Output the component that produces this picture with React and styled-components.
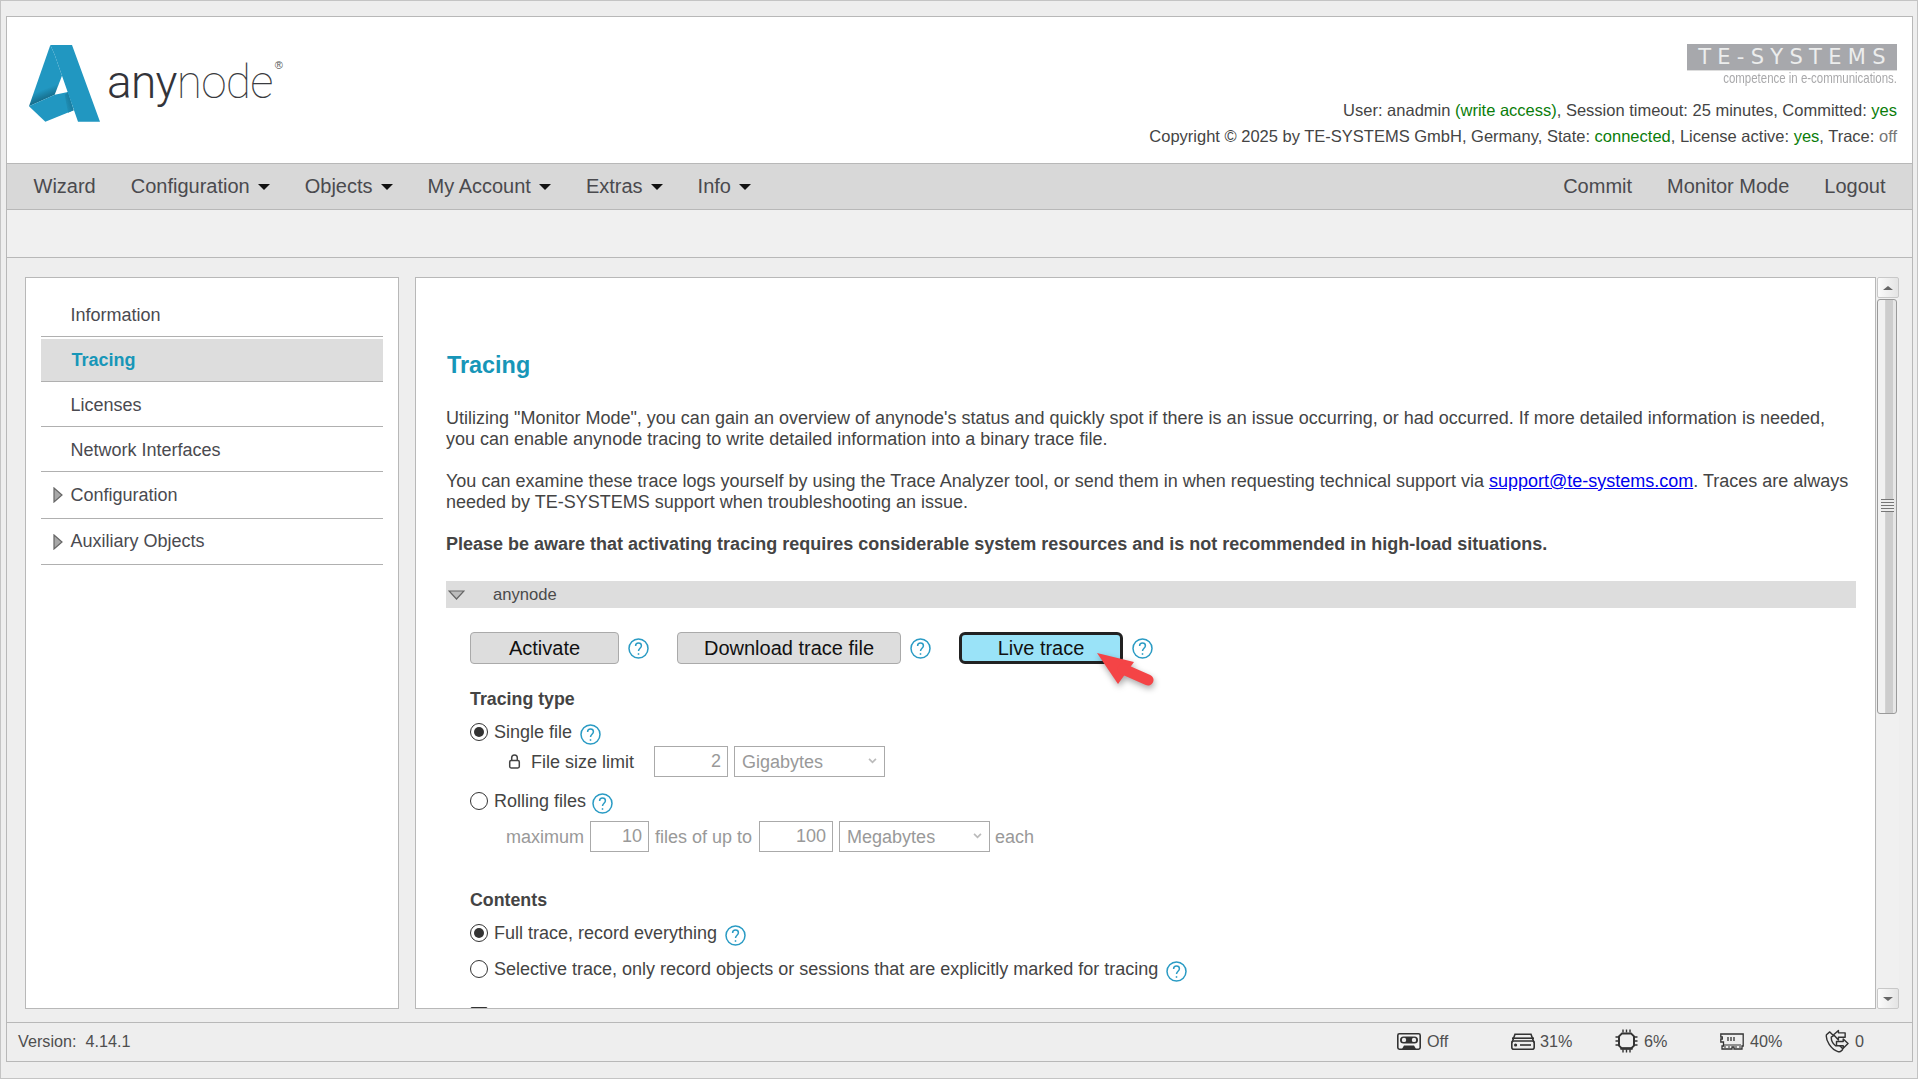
import React from "react";
import styled, { createGlobalStyle } from "styled-components";

const Global = createGlobalStyle`
  html, body { margin: 0; padding: 0; background: #fff; }
  body { font-family: "Liberation Sans", Arial, sans-serif; color: #444; }
`;

const Page = styled.div`
  box-sizing: border-box; width: 1918px; height: 1079px; background: #eee;
  border: 1px solid #c4c4c4; padding: 15px 4px 0 5px;
`;
const Frame = styled.div`
  box-sizing: border-box; height: 1046px; border: 1px solid #b8b8b8; display: flex; flex-direction: column;
  background: #eee; overflow: hidden;
`;

// header
const Header = styled.header`
  height: 146px; flex: none; background: #fff; display: flex; justify-content: space-between;
  padding: 0 15px 0 21px; box-sizing: border-box;
`;
const LogoWrap = styled.div` display: flex; align-items: flex-start; padding-top: 26px; gap: 5px; `;
const Wordmark = styled.div`
  font-family: Roboto, sans-serif; font-size: 46px; line-height: 54px; color: #33343a; font-weight: 300;
  letter-spacing: -0.7px; padding-top: 12px; display: flex; align-items: flex-start;
`;
const Thin = styled.span` font-weight: 100; color: #3a3b40; `;
const Reg = styled.span` font-size: 11px; line-height: 12px; margin: 4px 0 0 2px; font-family: "Liberation Sans", sans-serif; color: #555; letter-spacing: 0; `;
const HeaderRight = styled.div` display: flex; flex-direction: column; align-items: flex-end; padding-top: 27px; `;
const TeLogo = styled.div`
  width: 210px; height: 26px; box-sizing: content-box; background: #a7a8ac; color: #eceded; font-family: "DejaVu Sans", sans-serif; font-size: 21px; line-height: 26px;
  letter-spacing: 6.3px; text-align: center; text-indent: 6px; white-space: nowrap; border-bottom: 1px solid #ddd;
`;
const Tagline = styled.div`
  font-size: 14.5px; line-height: 15px; color: #a9a9ab; white-space: nowrap; transform: scaleX(0.79); transform-origin: right center;
`;
const Meta = styled.div`
  font-size: 16.5px; line-height: 26px; white-space: nowrap; color: #444; margin-top: ${(p) => p.$mt || 0}px;
`;
const Ok = styled.span` color: #0a7d0a; `;
const Mute = styled.span` color: #777; `;

// nav
const Nav = styled.nav`
  flex: none; height: 47px; box-sizing: border-box; background: #d8d8d8; border-top: 1px solid #b8b8b8; border-bottom: 1px solid #b8b8b8;
  display: flex; justify-content: space-between; padding: 0 9px 0 9px;
`;
const NavGroup = styled.div` display: flex; align-items: center; `;
const NavItem = styled.div`
  font-size: 20px; color: #4a4a4e; padding: 0 17.5px; display: flex; align-items: center; gap: 8px; white-space: nowrap;
`;
const Caret = styled.span`
  width: 0; height: 0; border-left: 6px solid transparent; border-right: 6px solid transparent; border-top: 6px solid #111;
`;
const Toolbar = styled.div` flex: none; height: 48px; box-sizing: border-box; background: #f0f0f0; border-bottom: 1px solid #b8b8b8; `;

// main
const Main = styled.main`
  flex: none; height: 764px; display: flex; padding: 19px 13px 0 18px; box-sizing: border-box; background: #eee;
`;
const Sidebar = styled.aside`
  box-sizing: border-box; width: 374px; height: 732px; flex: none; background: #fff; border: 1px solid #b8b8b8; padding: 14px 15px 0 15px;
`;
const SideItem = styled.div`
  height: ${(p) => p.$h || 45}px; box-sizing: border-box; display: flex; align-items: center; position: relative; padding-left: ${(p) => (p.$active ? 30.5 : 29.5)}px;
  padding-top: ${(p) => p.$pt || 0}px;
  font-size: 18px; color: #4a4a50; white-space: nowrap;
  border-bottom: 1px solid #b0b0b0;
  ${(p) => p.$active && "background: #ddd; color: #1796b8; font-weight: bold; margin-top: 1px; border-top: 1px solid #fff; background-clip: padding-box;"}
`;
const SideArrow = styled.svg` position: absolute; left: 12px; top: 50%; margin-top: -8px; `;

const Panel = styled.section`
  box-sizing: border-box; width: 1461px; height: 732px; flex: none; margin-left: 16px; background: #fff; border: 1px solid #b8b8b8;
  padding: 72px 18px 0 30px; overflow: hidden; font-size: 18px; color: #444;
`;
const Title = styled.h1`
  margin: 0 0 0 1px; font-size: 23.4px; line-height: 30px; font-weight: bold; color: #1796b8;
`;
const Para = styled.p`
  margin: ${(p) => p.$mt ?? 21}px 0 0; line-height: 21px; white-space: nowrap; font-weight: ${(p) => (p.$bold ? "bold" : "normal")};
`;
const Mail = styled.a` color: #0000ee; text-decoration: underline; `;
const GroupBar = styled.div`
  margin-top: 26px; height: 27px; background: #ddd; display: flex; align-items: center; font-size: 16.6px; color: #4a4a4a; gap: 28px; padding-left: 2px; width: 1410px; box-sizing: border-box;
`;
const ButtonRow = styled.div` margin: 24px 0 0 24px; display: flex; align-items: center; height: 32px; `;
const Btn = styled.button`
  box-sizing: border-box; height: 32px; width: ${(p) => p.$w}px; padding: 0; font: 20px "Liberation Sans", sans-serif; color: #111;
  background: ${(p) => (p.$live ? "#9ae3f8" : "#ddd")}; border: ${(p) => (p.$live ? "3px solid #222" : "1px solid #aaa")}; border-radius: ${(p) => (p.$live ? 6 : 4)}px;
`;
const HelpWrap = styled.span`
  display: inline-flex; margin-left: ${(p) => p.$ml ?? 9}px; margin-right: ${(p) => p.$mr || 0}px; position: relative; top: ${(p) => p.$top || 0}px;
`;
const LiveWrap = styled.span` position: relative; display: inline-flex; `;
const Arrow = styled.svg`
  position: absolute; left: 134px; top: 17px; overflow: visible; filter: drop-shadow(1px 3px 3px rgba(0,0,0,.35));
`;
const Section = styled.div`
  margin: ${(p) => p.$mt}px 0 0 24px; font-weight: bold; font-size: 17.8px; line-height: 24px; color: #444;
`;
const Row = styled.div`
  margin: ${(p) => p.$mt}px 0 0 ${(p) => p.$ml ?? 24}px; min-height: 24px; display: flex; align-items: center; white-space: nowrap; font-size: 18px;
  color: ${(p) => (p.$off ? "#999" : "#444")};
`;
const Radio = styled.span`
  box-sizing: border-box; width: 18px; height: 18px; border-radius: 50%; border: 1.6px solid #333; background: #fff; display: inline-flex; align-items: center; justify-content: center; margin-right: 6px; flex: none;
  &::after { content: ""; width: 10px; height: 10px; border-radius: 50%; background: ${(p) => (p.$on ? "#333" : "transparent")}; }
`;
const Check = styled.div`
  margin: 26px 0 0 24px; box-sizing: border-box; width: 18px; height: 18px; border: 1.6px solid #333; border-radius: 2px;
`;
const Field = styled.input`
  box-sizing: border-box; width: ${(p) => p.$w}px; height: 31px; border: 1px solid #aaa; background: #fff; text-align: right; color: #999; font: 18px "Liberation Sans", sans-serif; padding: 0 6px 1px 0; margin: ${(p) => p.$m || "0"}; outline: 0;
`;
const RowText = styled.span` padding-top: 2px; `;
const SelectWrap = styled.span` position: relative; display: inline-flex; margin: 0 5px 0 6px; `;
const Select = styled.select`
  appearance: none; box-sizing: border-box; width: 151px; height: 31px; border: 1px solid #aaa; background: #fff; color: #999; font: 18px "Liberation Sans", sans-serif; padding: 0 0 0 7px; opacity: 1;
`;
const Chevron = styled.svg` position: absolute; right: 8px; top: 12px; `;

// scrollbar
const Scroll = styled.div`
  flex: none; width: 22px; height: 732px; margin-left: 1px; background: #f0f0f0; display: flex; flex-direction: column; justify-content: space-between; position: relative;
`;
const ScrollBtn = styled.div`
  box-sizing: border-box; height: 21px; border: 1px solid #c8c8c8; background: linear-gradient(90deg, #fbfbfb, #e4e4e4); display: flex; align-items: center; justify-content: center; border-radius: 2px;
`;
const ScrollTri = styled.span`
  width: 0; height: 0; border-left: 5px solid transparent; border-right: 5px solid transparent;
  ${(p) => (p.$up ? "border-bottom: 4px solid #666;" : "border-top: 4px solid #666;")}
`;
const Thumb = styled.div`
  position: absolute; left: 0; top: 22px; width: 20px; height: 415px; box-sizing: border-box; border: 1px solid #9a9a9a; border-radius: 3px;
  background: linear-gradient(90deg, #f1f1f1 0 40%, #cdcdcd 42% 82%, #e6e6e6 84%); display: flex; align-items: center; justify-content: center;
`;
const Grip = styled.div`
  width: 13px; height: 13px; margin-top: -2px; background: repeating-linear-gradient(180deg, #777 0 1px, #eee 1px 3px);
`;

// footer
const Footer = styled.footer`
  flex: 1; box-sizing: border-box; border-top: 1px solid #b8b8b8; display: flex; align-items: center; justify-content: space-between;
  padding: 0 48px 2px 11px; font-size: 16.2px; color: #4f4f4f; background: #eee;
`;
const Status = styled.div` display: flex; align-items: center; `;
const Stat = styled.div`
  width: ${(p) => p.$w}px; display: flex; align-items: center; gap: ${(p) => p.$gap ?? 6}px; white-space: nowrap;
`;

function Help(props) {
  return (
    <HelpWrap {...props}>
      <svg width="21" height="21" viewBox="0 0 21 21" fill="none" stroke="#2a9bc4" strokeWidth="1.5">
        <circle cx="10.5" cy="10.5" r="9.5" />
        <path d="M7.6 8.1c0-1.9 1.3-3 2.9-3s2.9 1.1 2.9 2.7c0 2.4-2.9 2.5-2.9 5.2" />
        <path d="M10.5 15.2v1.6" />
      </svg>
    </HelpWrap>
  );
}

function Logo() {
  return (
    <svg width="74" height="80" viewBox="85 130 222 240">
      <defs>
        <linearGradient id="fold1" x1="150" y1="320" x2="130" y2="270" gradientUnits="userSpaceOnUse">
          <stop offset="0" stopColor="#2197c1" />
          <stop offset="0.5" stopColor="#17708f" />
          <stop offset="1" stopColor="#2197c1" />
        </linearGradient>
        <linearGradient id="fold2" x1="190" y1="310" x2="225" y2="300" gradientUnits="userSpaceOnUse">
          <stop offset="0" stopColor="#2197c1" />
          <stop offset="1" stopColor="#176f8e" />
        </linearGradient>
      </defs>
      <polygon points="152,136 88,320 165,285 187,228 165,165" fill="url(#fold1)" />
      <polygon points="88,320 137,366 222,332 205,277 165,285" fill="#2197c1" />
      <polygon points="195,285 205,277 222,332 205,339" fill="url(#fold2)" />
      <polygon points="152,136 217,136 301,366 235,366 187,228 165,165" fill="#2197c1" />
    </svg>
  );
}

function Triangle() {
  return (
    <SideArrow width="10" height="16" viewBox="0 0 10 16">
      <polygon points="1,1 9,8 1,15" fill="#a8a8a8" stroke="#666" strokeWidth="1.2" />
    </SideArrow>
  );
}

function Cassette() {
  return (
    <svg width="24" height="17" viewBox="0 0 24 17">
      <rect x="0.8" y="0.8" width="22.4" height="15.4" rx="1.6" fill="#f4f4f4" stroke="#333" strokeWidth="1.6" />
      <rect x="3" y="3.4" width="18" height="7" rx="3.5" fill="#333" />
      <circle cx="7" cy="6.9" r="2.2" fill="#eee" />
      <circle cx="17" cy="6.9" r="2.2" fill="#eee" />
      <path d="M5 16l2-3.5h10l2 3.5z" fill="#333" />
    </svg>
  );
}

function Disk() {
  return (
    <svg width="24" height="17" viewBox="0 0 24 17" fill="none" stroke="#333" strokeWidth="1.6">
      <path d="M1 9.5L4 1.2h16l3 8.3" />
      <rect x="0.8" y="8" width="22.4" height="8.2" rx="2" />
      <path d="M1 5.2h22" />
      <path d="M9 12h11" />
      <circle cx="4.6" cy="12" r="0.8" fill="#333" />
    </svg>
  );
}

function Chip() {
  return (
    <svg width="23" height="24" viewBox="0 0 23 24" fill="none" stroke="#333" strokeWidth="1.4">
      <path d="M7 4.4h9l3 3v9.2l-3 3H7l-3-3V7.4z" strokeWidth="2" />
      <path d="M8 0.5v3M11.5 0.5v3M15 0.5v3M8 20.5v3M11.5 20.5v3M15 20.5v3M0.5 8h3M0.5 12h3M0.5 16h3M19.5 8h3M19.5 12h3M19.5 16h3" />
      <path d="M6 19h11v1H6z" fill="#333" />
    </svg>
  );
}

function Ram() {
  return (
    <svg width="24" height="17" viewBox="0 0 24 17" fill="none" stroke="#333" strokeWidth="1.3">
      <path d="M0.8 1h22.4v12H22v3h-8v-2h-2v2H2v-3h1.5V9H.8V6h1.5V4H.8z" />
      <path d="M8 4v4M11 4v4M14 4v4" />
      <path d="M3 12h18M4 14h2M8 14h2M15 14h2M19 14h2" strokeWidth="1" />
    </svg>
  );
}

function Phone() {
  return (
    <svg width="25" height="24" viewBox="0 0 25 24" fill="none" stroke="#333" strokeWidth="1.5" strokeLinejoin="round">
      <path d="M5 2.5L1.5 5.5C.5 11 6 21 14 23.3c2 0 4.5-1.8 4.5-3.3L14 15.5 11 17c-2.5-2-4.5-6-4.5-9L9 6.5z" />
      <path d="M9 5.5L14 1v2.5h7V8h-7v3z" fill="#eee" />
      <path d="M24 14.7L19 10v2.5h-7V17h7v2.5z" fill="#eee" />
    </svg>
  );
}

const LockIcon = styled.svg` margin-right: 10px; `;
const Lock = () => (
  <LockIcon width="13" height="15" viewBox="0 0 13 15" fill="none" stroke="#444" strokeWidth="1.5">
    <rect x="1.7" y="6.5" width="9.6" height="7.5" rx="1.4" />
    <path d="M3.7 6.5V3.8a2.8 2.8 0 0 1 5.6 0v2.7" />
  </LockIcon>
);

function DisabledSelect({ value }) {
  return (
    <SelectWrap>
      <Select disabled value={value} onChange={() => {}}>
        <option>{value}</option>
      </Select>
      <Chevron width="9" height="6" viewBox="0 0 10 7" fill="none" stroke="#bbb" strokeWidth="2">
        <path d="M1 1l4 4 4-4" />
      </Chevron>
    </SelectWrap>
  );
}

const menus = [
  { label: "Wizard" },
  { label: "Configuration", caret: true },
  { label: "Objects", caret: true },
  { label: "My Account", caret: true },
  { label: "Extras", caret: true },
  { label: "Info", caret: true },
];

export default function App() {
  return (
    <Page>
      <Global />
      <Frame>
        <Header>
          <LogoWrap>
            <Logo />
            <Wordmark>
              any<Thin>node</Thin>
              <Reg>®</Reg>
            </Wordmark>
          </LogoWrap>
          <HeaderRight>
            <TeLogo>TE-SYSTEMS</TeLogo>
            <Tagline>competence in e-communications.</Tagline>
            <Meta $mt={11}>
              User: anadmin <Ok>(write access)</Ok>, Session timeout: 25 minutes, Committed: <Ok>yes</Ok>
            </Meta>
            <Meta>
              Copyright © 2025 by TE-SYSTEMS GmbH, Germany, State: <Ok>connected</Ok>, License active: <Ok>yes</Ok>, Trace: <Mute>off</Mute>
            </Meta>
          </HeaderRight>
        </Header>

        <Nav>
          <NavGroup>
            {menus.map((m) => (
              <NavItem key={m.label}>
                {m.label}
                {m.caret && <Caret />}
              </NavItem>
            ))}
          </NavGroup>
          <NavGroup>
            <NavItem>Commit</NavItem>
            <NavItem>Monitor Mode</NavItem>
            <NavItem>Logout</NavItem>
          </NavGroup>
        </Nav>
        <Toolbar />

        <Main>
          <Sidebar>
            <SideItem $pt={2}>Information</SideItem>
            <SideItem $active $h={44} $pt={1}>Tracing</SideItem>
            <SideItem $pt={2}>Licenses</SideItem>
            <SideItem $pt={2}>Network Interfaces</SideItem>
            <SideItem $h={47}><Triangle />Configuration</SideItem>
            <SideItem $h={46}><Triangle />Auxiliary Objects</SideItem>
          </Sidebar>

          <Panel>
            <Title>Tracing</Title>
            <Para $mt={28}>
              Utilizing "Monitor Mode", you can gain an overview of anynode's status and quickly spot if there is an issue occurring, or had occurred. If more detailed information is needed,
              <br />
              you can enable anynode tracing to write detailed information into a binary trace file.
            </Para>
            <Para>
              You can examine these trace logs yourself by using the Trace Analyzer tool, or send them in when requesting technical support via <Mail href="#">support@te-systems.com</Mail>. Traces are always
              <br />
              needed by TE-SYSTEMS support when troubleshooting an issue.
            </Para>
            <Para $bold>Please be aware that activating tracing requires considerable system resources and is not recommended in high-load situations.</Para>

            <GroupBar>
              <svg width="17" height="10" viewBox="0 0 17 10">
                <polygon points="1,1 16,1 8.5,9" fill="#bdbdbd" stroke="#666" strokeWidth="1.2" />
              </svg>
              anynode
            </GroupBar>

            <ButtonRow>
              <Btn $w={149}>Activate</Btn>
              <Help $mr={28} />
              <Btn $w={224}>Download trace file</Btn>
              <Help $mr={28} />
              <LiveWrap>
                <Btn $live $w={164}>Live trace</Btn>
                <Arrow width="60" height="38" viewBox="0 0 60 38">
                  <polygon points="4,4 41,13 25,35" fill="#f44446" />
                  <path d="M30 20L55 31" stroke="#f44446" strokeWidth="11" strokeLinecap="round" />
                </Arrow>
              </LiveWrap>
              <Help />
            </ButtonRow>

            <Section $mt={23}>Tracing type</Section>
            <Row $mt={9}>
              <Radio $on />Single file<Help $top={2} $ml={8} />
            </Row>
            <Row $mt={2} $ml={62}>
              <Lock /><RowText>File size limit</RowText>
              <Field disabled $w={74} $m="0 0 0 20px" value="2" readOnly />
              <DisabledSelect value="Gigabytes" />
            </Row>
            <Row $mt={12}>
              <Radio />Rolling files<Help $top={2} $ml={6} />
            </Row>
            <Row $mt={8} $ml={60} $off>
              <RowText>maximum</RowText>
              <Field disabled $w={59} $m="0 6px 0 6px" value="10" readOnly />
              <RowText>files of up to</RowText>
              <Field disabled $w={74} $m="0 0 0 7px" value="100" readOnly />
              <DisabledSelect value="Megabytes" />
              <RowText>each</RowText>
            </Row>

            <Section $mt={36}>Contents</Section>
            <Row $mt={9}>
              <Radio $on />Full trace, record everything<Help $top={2} $ml={8} />
            </Row>
            <Row $mt={12}>
              <Radio />Selective trace, only record objects or sessions that are explicitly marked for tracing<Help $top={2} $ml={8} />
            </Row>
            <Check />
          </Panel>

          <Scroll>
            <ScrollBtn><ScrollTri $up /></ScrollBtn>
            <Thumb><Grip /></Thumb>
            <ScrollBtn><ScrollTri /></ScrollBtn>
          </Scroll>
        </Main>

        <Footer>
          <span>Version:&nbsp; 4.14.1</span>
          <Status>
            <Stat $w={114}><Cassette />Off</Stat>
            <Stat $w={104} $gap={5}><Disk />31%</Stat>
            <Stat $w={105}><Chip />6%</Stat>
            <Stat $w={105}><Ram />40%</Stat>
            <Stat $w={39}><Phone />0</Stat>
          </Status>
        </Footer>
      </Frame>
    </Page>
  );
}
